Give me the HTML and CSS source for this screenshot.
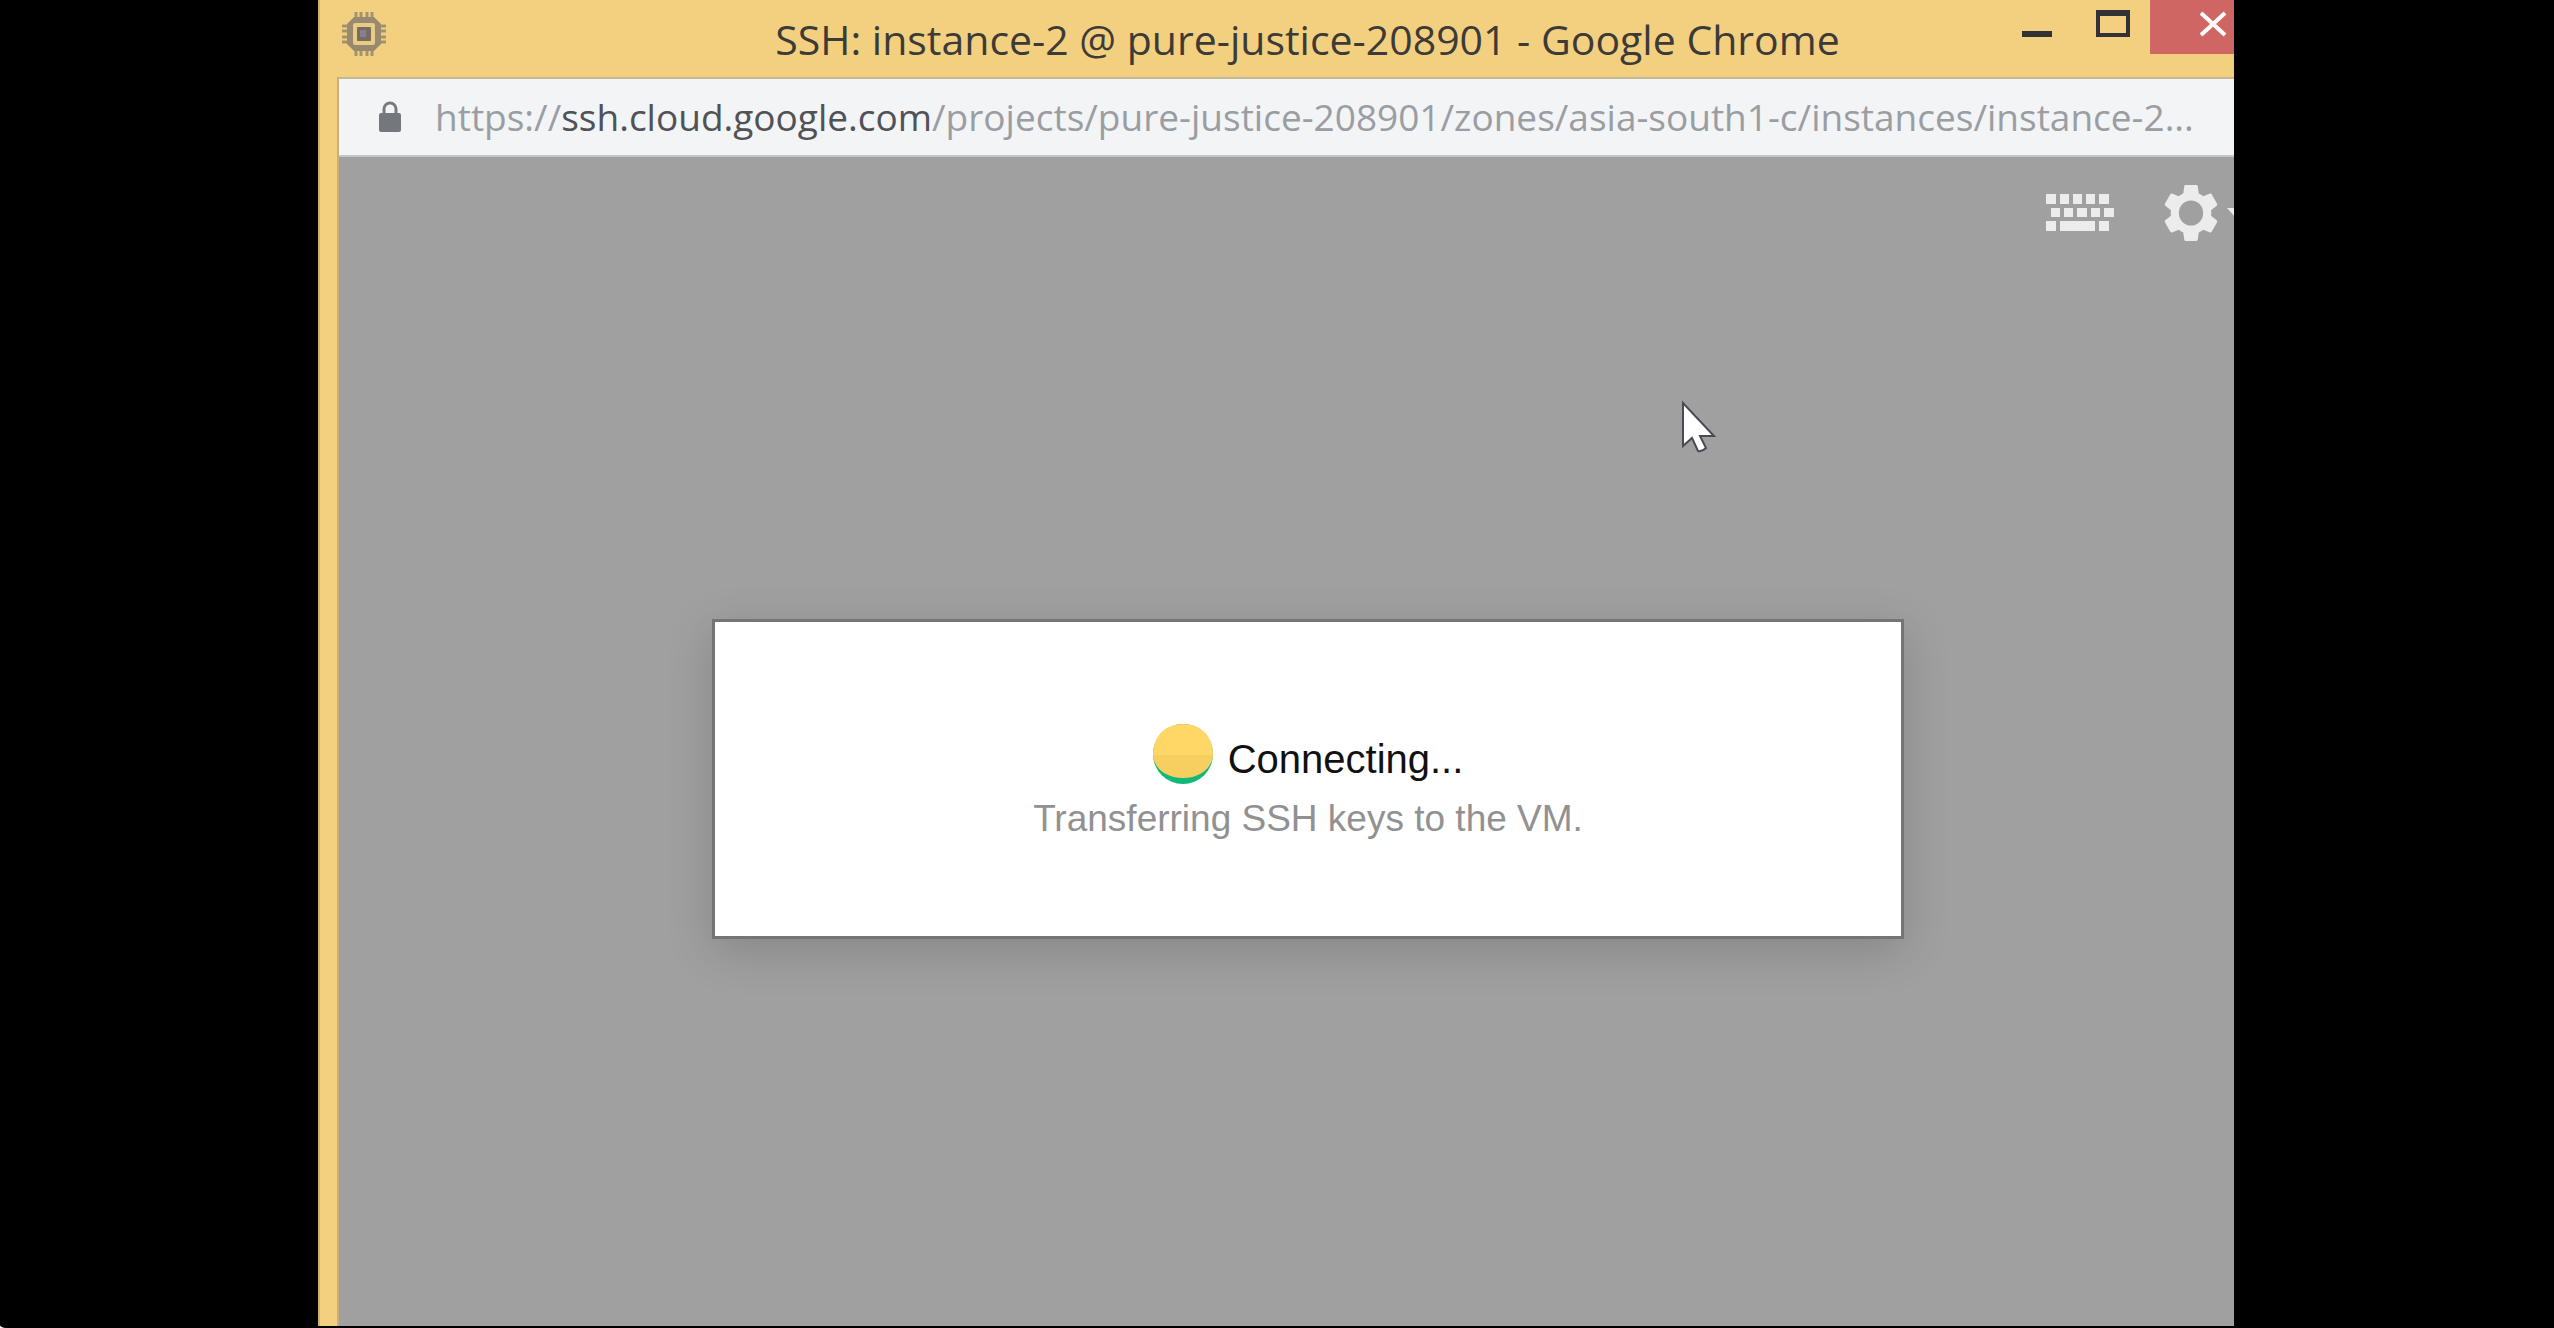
FILE: index.html
```html
<!DOCTYPE html>
<html lang="en">
<head>
<meta charset="utf-8">
<title>SSH: instance-2 @ pure-justice-208901 - Google Chrome</title>
<link rel="stylesheet" href="styles.css">
</head>
<body>
<div class="viewport">
  <div class="window">
    <header class="titlebar">
      <svg class="chip" viewBox="0 0 44 44" aria-hidden="true">
        <path d="M14 0v44M19 0v44M25 0v44M30 0v44M0 14h44M0 19h44M0 25h44M0 30h44" stroke="#a3936f" stroke-width="3"/>
        <path d="M12 5h20l7 7v20l-7 7H12l-7-7V12z" fill="#98896f"/>
        <rect x="11" y="11" width="22" height="22" rx="2" fill="#e8cb85"/>
        <rect x="15" y="15" width="14" height="14" rx="1" fill="#7a6c5c"/>
        <rect x="18" y="18" width="6" height="7" fill="#85809a"/>
      </svg>
      <h1 class="title">SSH: instance-2 @ pure-justice-208901 - Google Chrome</h1>
      <div class="controls">
        <button class="control" type="button" aria-label="Minimize"><svg width="34" height="28" viewBox="0 0 34 28"><path d="M1 21h30v6H1z" fill="#303236"/></svg></button>
        <button class="control" type="button" aria-label="Maximize"><svg width="34" height="28" viewBox="0 0 34 28"><path d="M0 0h34v27H0zM4 6v17h26V6z" fill="#303236" fill-rule="evenodd"/></svg></button>
        <button class="control control-close" type="button" aria-label="Close"><svg width="28" height="28" viewBox="0 0 28 28"><path d="M2 3l24 22M26 3L2 25" stroke="#fff" stroke-width="4"/></svg></button>
      </div>
    </header>
    <div class="client">
      <div class="address">
        <svg class="lock" viewBox="0 0 24 32" aria-hidden="true">
          <path d="M6 14V8a6 6 0 0 1 12 0v6" fill="none" stroke="#777b80" stroke-width="3"/>
          <rect x="1" y="12" width="22" height="19" rx="2" fill="#74787d"/>
        </svg>
        <span class="url">https://<span class="host">ssh.cloud.google.com</span>/projects/pure-justice-208901/zones/asia-south1-c/instances/instance-2...</span>
      </div>
      <main class="terminal">
        <div class="tools">
          <button class="tool" type="button" aria-label="Keyboard">
            <svg width="68" height="38" viewBox="0 0 68 38" fill="#ececec"><path d="M0 0h10v10H0zM14 0h9v10h-9zM27 0h9v10h-9zM40 0h9v10h-9zM53 0h10v10H53zM5 14h9v9H5zM18 14h9v9h-9zM31 14h10v9H31zM45 14h9v9h-9zM58 14h10v9H58zM0 27h10v10H0zM14 27h35v10H14zM53 27h10v10H53z"/></svg>
          </button>
          <button class="tool" type="button" aria-label="Settings">
            <svg width="54" height="56" viewBox="2 2 20 20" preserveAspectRatio="none" fill="#ececec"><path d="M19.43 12.98c.04-.32.07-.64.07-.98s-.03-.66-.07-.98l2.110-1.650c.19-.15.24-.42.12-.64l-2-3.460c-.12-.22-.39-.3-.61-.22l-2.490 1c-.52-.4-1.080-.73-1.690-.98l-.38-2.650C14.460 2.180 14.250 2 14 2h-4c-.25 0-.46.18-.49.42l-.38 2.650c-.61.25-1.170.59-1.690.98l-2.490-1c-.23-.09-.49 0-.61.22l-2 3.460c-.13.22-.07.49.12.64l2.110 1.650c-.04.32-.07.65-.07.98s.03.66.07.98l-2.110 1.650c-.19.15-.24.42-.12.64l2 3.460c.12.22.39.3.61.22l2.490-1c.52.4 1.080.73 1.690.98l.38 2.650c.03.24.24.42.49.42h4c.25 0 .46-.18.49-.42l.38-2.650c.61-.25 1.170-.59 1.690-.98l2.490 1c.23.09.49 0 .61-.22l2-3.460c.12-.22.07-.49-.12-.64l-2.110-1.650zM12 16.500a4.500 4.500 0 1 1 0-9 4.500 4.500 0 0 1 0 9z"/></svg>
            <svg class="caret" width="18" height="10" viewBox="0 0 18 10" fill="#ececec"><path d="M0 0h18L9 10z"/></svg>
          </button>
        </div>
        <section class="dialog" role="dialog" aria-labelledby="status">
          <p class="status">
            <svg width="60" height="60" viewBox="0 0 60 60" aria-hidden="true">
              <circle cx="30" cy="30" r="30" fill="#12b877"/>
              <path d="M0 31C0 11 13 0 30 0s30 11 30 31z" fill="#ffd766"/>
              <path d="M0 31h60c-1 14-14 23-30 23S1 45 0 31z" fill="#f7cf60"/>
            </svg>
            <span id="status">Connecting...</span>
          </p>
          <p class="detail">Transferring SSH keys to the VM.</p>
        </section>
      </main>
    </div>
    <svg class="pointer" width="38" height="54" viewBox="0 0 38 54" aria-hidden="true"><path d="M2 3v43l9-8 6 13q4 1 8-3l-6-12h14z" fill="#fff" stroke="#4b4a54" stroke-width="2"/></svg>
  </div>
</div>
</body>
</html>
```
FILE: styles.css
```css
* {
  box-sizing: border-box;
}

html {
  background: #fff;
}

body {
  display: flex;
  min-height: 100vh;
  margin: 0;
  padding: 0 320px 2px 318px;
  border-bottom-left-radius: 6px 3px;
  background: #000;
}

.viewport {
  display: flex;
  flex: 1;
  min-width: 0;
  overflow: hidden;
}

/* The right edge of the window runs out of view. */
.window {
  position: relative;
  display: flex;
  flex-direction: column;
  flex: 0 0 calc(100% + 61px);
  border-left: 2px solid #d3b56f;
  background: #f3d080;
}

.titlebar {
  display: grid;
  grid-template-columns: 274px 1fr 274px;
  align-items: start;
  height: 77px;
}

.chip {
  width: 44px;
  height: 44px;
  margin: 12px 0 0 22px;
}

.title {
  justify-self: center;
  margin: 0;
  font: 400 41px/78px "Open Sans", "Noto Sans", sans-serif;
  color: #3c3b38;
  white-space: nowrap;
}

.controls {
  display: flex;
  justify-content: flex-end;
  margin-right: 19px;
}

.control {
  display: flex;
  flex: 0 0 75px;
  justify-content: center;
  height: 54px;
  padding: 10px 0 0;
  border: 0;
  background: none;
}

.control-close {
  flex-basis: 126px;
  background: #d06663;
}

.client {
  display: flex;
  flex: 1;
  flex-direction: column;
  margin: 0 18px 0 17px;
  border-left: 2px solid #c9b07a;
}

.address {
  display: flex;
  align-items: center;
  gap: 33px;
  height: 80px;
  padding-left: 39px;
  border-top: 2px solid #c4b897;
  border-bottom: 2px solid #c5c6c6;
  background: #f3f4f6;
}

.lock {
  flex: none;
  width: 24px;
  height: 32px;
}

.url {
  font: 400 37px/72px "Open Sans", "Noto Sans", sans-serif;
  color: #9a9ea2;
  white-space: nowrap;
}

.host {
  color: #505256;
}

.terminal {
  flex: 1;
  background: #a0a0a0;
}

.tools {
  display: flex;
  justify-content: flex-end;
  align-items: center;
  gap: 50px;
  height: 112px;
  padding-right: 32px;
}

.tool {
  display: flex;
  align-items: center;
  gap: 9px;
  padding: 0;
  border: 0;
  background: none;
}

.dialog {
  width: 1192px;
  margin: 350px auto 0;
  padding: 102px 40px 92px;
  border: 3px solid #757575;
  background: #fff;
  box-shadow: 0 12px 44px rgba(0, 0, 0, 0.16);
  font: 400 37px/50px "Liberation Sans", Arial, sans-serif;
  text-align: center;
}

.status {
  display: flex;
  justify-content: center;
  gap: 15px;
  margin: 0;
  font-size: 40px;
  line-height: 70px;
  color: #111;
}

.detail {
  margin: 0;
  color: #919191;
}

.pointer {
  position: absolute;
  top: 400px;
  left: 1361px;
}
```
